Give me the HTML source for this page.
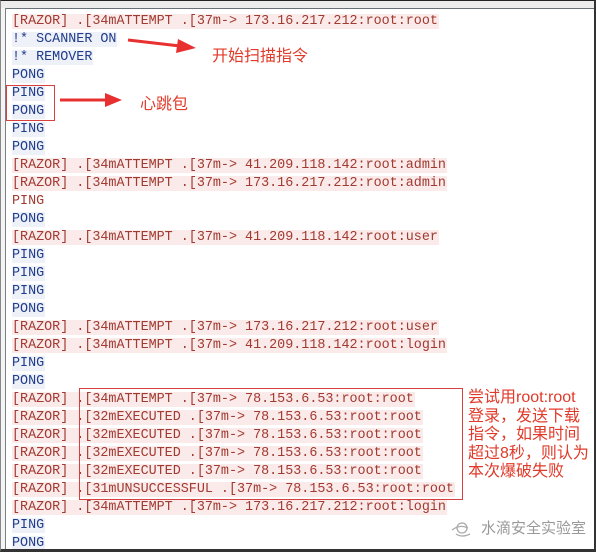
<!DOCTYPE html>
<html><head><meta charset="utf-8"><style>
html,body{margin:0;padding:0;}
body{width:596px;height:552px;position:relative;overflow:hidden;background:#fff;}
.frame{position:absolute;left:0;top:0;width:596px;height:552px;box-sizing:border-box;border-top:1px solid #222;border-right:2px solid #333;border-bottom:3px solid #333;border-left:1px solid #888;}
.topband{position:absolute;left:0;top:1px;width:594px;height:7px;background:#ececec;border-bottom:1px solid #6a7078;}
.leftband{position:absolute;left:0;top:8px;width:5px;height:541px;background:#f4f4f4;border-right:1px solid #7a8088;}
.lines{position:absolute;left:12px;top:13px;font-family:"Liberation Mono",monospace;font-size:13.4px;}
.l{height:18px;line-height:18px;white-space:pre;}
.l span{padding:0 1px 0 0;}
.r span{color:#a13a30;background:#fbeaea;}
.b span{color:#1f3c8c;background:#eef1f8;}
.rp span{color:#a13a30;}
.box{position:absolute;border:1px solid #d84040;}
.cn{position:absolute;font-family:"Liberation Sans","Noto Sans CJK SC",sans-serif;color:#e03a2a;}
</style></head><body>
<div class="topband"></div><div class="leftband"></div>
<div class="lines">
<div class="l r"><span>[RAZOR] .[34mATTEMPT .[37m-&gt; 173.16.217.212:root:root</span></div>
<div class="l b"><span>!* SCANNER ON</span></div>
<div class="l b"><span>!* REMOVER</span></div>
<div class="l b"><span>PONG</span></div>
<div class="l b"><span>PING</span></div>
<div class="l b"><span>PONG</span></div>
<div class="l b"><span>PING</span></div>
<div class="l b"><span>PONG</span></div>
<div class="l r"><span>[RAZOR] .[34mATTEMPT .[37m-&gt; 41.209.118.142:root:admin</span></div>
<div class="l r"><span>[RAZOR] .[34mATTEMPT .[37m-&gt; 173.16.217.212:root:admin</span></div>
<div class="l rp"><span>PING</span></div>
<div class="l b"><span>PONG</span></div>
<div class="l r"><span>[RAZOR] .[34mATTEMPT .[37m-&gt; 41.209.118.142:root:user</span></div>
<div class="l b"><span>PING</span></div>
<div class="l b"><span>PING</span></div>
<div class="l b"><span>PING</span></div>
<div class="l b"><span>PONG</span></div>
<div class="l r"><span>[RAZOR] .[34mATTEMPT .[37m-&gt; 173.16.217.212:root:user</span></div>
<div class="l r"><span>[RAZOR] .[34mATTEMPT .[37m-&gt; 41.209.118.142:root:login</span></div>
<div class="l b"><span>PING</span></div>
<div class="l b"><span>PONG</span></div>
<div class="l r"><span>[RAZOR] .[34mATTEMPT .[37m-&gt; 78.153.6.53:root:root</span></div>
<div class="l r"><span>[RAZOR] .[32mEXECUTED .[37m-&gt; 78.153.6.53:root:root</span></div>
<div class="l r"><span>[RAZOR] .[32mEXECUTED .[37m-&gt; 78.153.6.53:root:root</span></div>
<div class="l r"><span>[RAZOR] .[32mEXECUTED .[37m-&gt; 78.153.6.53:root:root</span></div>
<div class="l r"><span>[RAZOR] .[32mEXECUTED .[37m-&gt; 78.153.6.53:root:root</span></div>
<div class="l r"><span>[RAZOR] .[31mUNSUCCESSFUL .[37m-&gt; 78.153.6.53:root:root</span></div>
<div class="l r"><span>[RAZOR] .[34mATTEMPT .[37m-&gt; 173.16.217.212:root:login</span></div>
<div class="l b"><span>PING</span></div>
<div class="l b"><span>PONG</span></div>
</div>
<div class="box" style="left:6px;top:85px;width:47px;height:34px;"></div>
<div class="box" style="left:79px;top:388px;width:382px;height:110px;"></div>
<svg style="position:absolute;left:0;top:0" width="596" height="552">
<line x1="128" y1="40" x2="180" y2="46" stroke="#e83030" stroke-width="3"/>
<polygon points="196,48 178,39 176,53" fill="#e83030"/>
<line x1="60" y1="100" x2="108" y2="100" stroke="#e83030" stroke-width="3"/>
<polygon points="122,100 105,93 105,107" fill="#e83030"/>
<g stroke="#aaa" fill="none" stroke-width="1.3"><path d="M452 530 q8 -6 16 -2"/><path d="M456 534 q6 4 14 0"/><circle cx="462" cy="528" r="5"/></g>
</svg>
<div class="cn" style="left:212px;top:42px;font-size:16px;">开始扫描指令</div>
<div class="cn" style="left:140px;top:90px;font-size:16px;">心跳包</div>
<div class="cn" style="left:468px;top:389px;font-size:16px;line-height:18.5px;">尝试用root:root<br>登录，发送下载<br>指令，如果时间<br>超过8秒，则认为<br>本次爆破失败</div>
<div class="cn" style="left:481px;top:517px;font-size:15px;color:#999;">水滴安全实验室</div>
<div class="frame"></div>
</body></html>
